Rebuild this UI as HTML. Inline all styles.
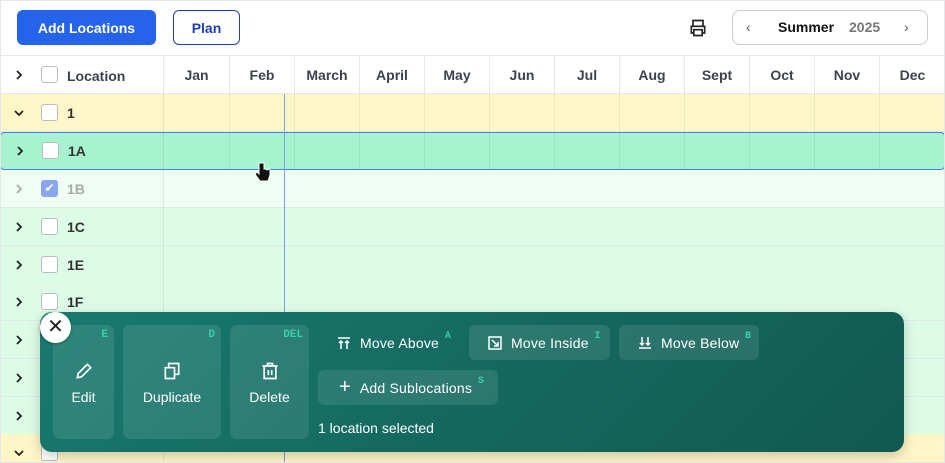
<!DOCTYPE html>
<html><head><style>
*{box-sizing:border-box;margin:0;padding:0}
body{width:945px;height:463px;overflow:hidden;background:#fff;font-family:"Liberation Sans",sans-serif;position:relative}
.abs{position:absolute}
.btn1{left:17px;top:10px;width:139px;height:35px;background:#2563eb;color:#fff;border-radius:6px;font-weight:bold;font-size:14px;display:flex;align-items:center;justify-content:center}
.btn2{left:173px;top:10px;width:67px;height:35px;border:1px solid #1e40af;color:#1e40af;border-radius:6px;font-weight:bold;font-size:14px;display:flex;align-items:center;justify-content:center}
.nav{left:732px;top:10px;width:196px;height:35px;border:1px solid #c8cbd0;border-radius:8px;font-size:14px}
.row{position:absolute;left:0;width:945px;height:38px;border-bottom:1px solid #e5e7eb}
.chev{position:absolute;left:13px;width:12px;height:12px}
.cb{position:absolute;left:41px;width:17px;height:17px;border:1px solid #b8bcc2;border-radius:3px;background:#fff}
.lbl{position:absolute;left:67px;font-weight:bold;font-size:14px;color:#333}
.hd{position:absolute;top:0;height:39px;line-height:39px;text-align:center;font-weight:bold;font-size:14px;color:#3c4350;border-left:1px solid #e5e7eb}
.panel{left:40px;top:312px;width:864px;height:140px;border-radius:12px;background:linear-gradient(135deg,#187a70,#11594f);box-shadow:0 4px 12px rgba(0,0,0,.2)}
.tile{position:absolute;top:13px;height:114px;background:rgba(255,255,255,.1);border-radius:7px;color:#fff;font-size:14px;text-align:center}
.tile .k{position:absolute;right:6px;top:4px;font-size:11px;color:#34d3a8;font-weight:bold;font-family:"Liberation Mono",monospace}
.tile .t{position:absolute;left:0;right:0;top:64px}
.tile svg{position:absolute;left:50%;top:36px;margin-left:-10px}
.pill{position:absolute;height:35px;border-radius:6px;background:rgba(255,255,255,.1);color:#fff;font-size:14px;display:flex;align-items:center;letter-spacing:.2px}
.pill sup{font-size:10px;color:#34d3a8;font-weight:bold;position:absolute;right:-12px;top:-4px;font-family:"Liberation Mono",monospace}
.vl{position:absolute;top:94px;width:1px;height:76px;background:rgba(0,0,0,.06)}
</style></head><body>
<div class="abs btn1">Add Locations</div>
<div class="abs btn2">Plan</div>
<svg class="abs" style="left:688px;top:18px" width="20" height="20" viewBox="0 0 24 24" fill="none" stroke="#222" stroke-width="2"><path d="M6 9V3h12v6M6 18H4V10h16v8h-2M7 14h10v7H7z"/></svg>
<div class="abs nav"><span class="abs" style="left:13px;top:8px;color:#555">‹</span><span class="abs" style="left:45px;top:8px;font-weight:bold;color:#111">Summer</span><span class="abs" style="left:116px;top:8px;font-weight:bold;color:#777">2025</span><span class="abs" style="left:171px;top:8px;color:#555">›</span></div>
<div class="abs" style="left:0;top:55px;width:945px;height:39px;border-top:1px solid #e5e7eb;border-bottom:1px solid #e5e7eb">
<svg class="chev" style="top:13px" viewBox="0 0 12 12"><path d="M4 2l4 4-4 4" fill="none" stroke="#222" stroke-width="1.8"/></svg><div class="cb" style="top:10px"></div><span class="lbl" style="top:12px;color:#3c4350">Location</span>
<div class="hd" style="left:163px;width:66px">Jan</div><div class="hd" style="left:229px;width:65px">Feb</div><div class="hd" style="left:294px;width:65px">March</div><div class="hd" style="left:359px;width:65px">April</div><div class="hd" style="left:424px;width:65px">May</div><div class="hd" style="left:489px;width:65px">Jun</div><div class="hd" style="left:554px;width:65px">Jul</div><div class="hd" style="left:619px;width:65px">Aug</div><div class="hd" style="left:684px;width:65px">Sept</div><div class="hd" style="left:749px;width:65px">Oct</div><div class="hd" style="left:814px;width:65px">Nov</div><div class="hd" style="left:879px;width:66px">Dec</div>
</div>
<div class="row" style="top:94px;background:#fef6c6"><svg class="chev" style="top:13px" viewBox="0 0 12 12"><path d="M2 4l4 4 4-4" fill="none" stroke="#222" stroke-width="1.8"/></svg><div class="cb" style="top:10px"></div><span class="lbl" style="top:11px">1</span></div>
<div class="row" style="top:132px;background:#a7f3d0;border:1px solid #3b82f6;border-radius:4px;height:38px"><svg class="chev" style="top:12px" viewBox="0 0 12 12"><path d="M4 2l4 4-4 4" fill="none" stroke="#222" stroke-width="1.8"/></svg><div class="cb" style="top:9px"></div><span class="lbl" style="top:10px">1A</span></div>
<div class="row" style="top:170px;background:#effdf4"><svg class="chev" style="top:13px" viewBox="0 0 12 12"><path d="M4 2l4 4-4 4" fill="none" stroke="#aaa" stroke-width="1.8"/></svg><div class="cb" style="top:10px;background:#8ba6f0;border-color:#8ba6f0;color:#fff;font-size:12px;text-align:center;line-height:15px">✔</div><span class="lbl" style="top:11px;color:#aaa">1B</span></div>
<div class="row" style="top:208px;background:#dcfce7"><svg class="chev" style="top:13px" viewBox="0 0 12 12"><path d="M4 2l4 4-4 4" fill="none" stroke="#222" stroke-width="1.8"/></svg><div class="cb" style="top:10px"></div><span class="lbl" style="top:11px">1C</span></div>
<div class="row" style="top:246px;background:#dcfce7"><svg class="chev" style="top:13px" viewBox="0 0 12 12"><path d="M4 2l4 4-4 4" fill="none" stroke="#222" stroke-width="1.8"/></svg><div class="cb" style="top:10px"></div><span class="lbl" style="top:11px">1E</span></div>
<div class="row" style="top:283px;background:#dcfce7"><svg class="chev" style="top:13px" viewBox="0 0 12 12"><path d="M4 2l4 4-4 4" fill="none" stroke="#222" stroke-width="1.8"/></svg><div class="cb" style="top:10px"></div><span class="lbl" style="top:11px">1F</span></div>
<div class="row" style="top:321px;background:#dcfce7"><svg class="chev" style="top:13px" viewBox="0 0 12 12"><path d="M4 2l4 4-4 4" fill="none" stroke="#222" stroke-width="1.8"/></svg></div>
<div class="row" style="top:359px;background:#dcfce7"><svg class="chev" style="top:13px" viewBox="0 0 12 12"><path d="M4 2l4 4-4 4" fill="none" stroke="#222" stroke-width="1.8"/></svg></div>
<div class="row" style="top:397px;background:#dcfce7"><svg class="chev" style="top:13px" viewBox="0 0 12 12"><path d="M4 2l4 4-4 4" fill="none" stroke="#222" stroke-width="1.8"/></svg></div>
<div class="row" style="top:434px;background:#fef6c6;height:29px"><svg class="chev" style="top:13px" viewBox="0 0 12 12"><path d="M2 4l4 4 4-4" fill="none" stroke="#222" stroke-width="1.8"/></svg><div class="cb" style="top:10px"></div></div>
<div class="abs" style="left:163px;top:94px;width:1px;height:369px;background:rgba(0,0,0,.07)"></div>
<div class="vl" style="left:229px"></div><div class="vl" style="left:294px"></div><div class="vl" style="left:359px"></div><div class="vl" style="left:424px"></div><div class="vl" style="left:489px"></div><div class="vl" style="left:554px"></div><div class="vl" style="left:619px"></div><div class="vl" style="left:684px"></div><div class="vl" style="left:749px"></div><div class="vl" style="left:814px"></div><div class="vl" style="left:879px"></div>
<div class="abs" style="left:284px;top:94px;width:1px;height:369px;background:#7aa3e0"></div>
<svg class="abs" style="left:254px;top:161px" width="18" height="22" viewBox="0 0 18 22"><path d="M5 2v11l-2-2-2 2 5 7h8l2-6v-5l-2-1-1 1-1-1-2 0V2z" fill="#111" stroke="#fff" stroke-width="1"/></svg>
<div class="abs panel">
<div class="tile" style="left:13px;width:61px"><span class="k">E</span><svg width="20" height="20" viewBox="0 0 24 24" fill="none" stroke="#fff" stroke-width="2"><path d="M4 20l1-5L16 4l4 4L9 19z"/></svg><span class="t">Edit</span></div>
<div class="tile" style="left:83px;width:98px"><span class="k">D</span><svg width="20" height="20" viewBox="0 0 24 24" fill="none" stroke="#fff" stroke-width="2"><path d="M8 8V3h12v13h-5M4 8h11v13H4z"/></svg><span class="t">Duplicate</span></div>
<div class="tile" style="left:190px;width:79px"><span class="k">DEL</span><svg width="20" height="20" viewBox="0 0 24 24" fill="none" stroke="#fff" stroke-width="2"><path d="M3 6h18M9 6V3h6v3M5 6v15h14V6M10 11v6M14 11v6"/></svg><span class="t">Delete</span></div>
<div class="pill" style="left:278px;top:13px;width:142px;background:none;padding-left:19px"><svg width="14" height="14" viewBox="0 0 14 14" fill="none" stroke="#fff" stroke-width="1.5" style="margin-right:9px"><path d="M1 2h12M4 13V5M2 7l2-2 2 2M10 13V5M8 7l2-2 2 2"/></svg><span style="position:relative">Move Above<sup>A</sup></span></div>
<div class="pill" style="left:429px;top:13px;width:141px;padding-left:19px"><svg width="14" height="14" viewBox="0 0 14 14" fill="none" stroke="#fff" stroke-width="1.5" style="margin-right:9px"><rect x="1" y="1" width="12" height="12"/><path d="M4 4l6 6M10 6v4H6"/></svg><span style="position:relative">Move Inside<sup>I</sup></span></div>
<div class="pill" style="left:579px;top:13px;width:140px;padding-left:19px"><svg width="14" height="14" viewBox="0 0 14 14" fill="none" stroke="#fff" stroke-width="1.5" style="margin-right:9px"><path d="M1 12h12M4 1v8M2 7l2 2 2-2M10 1v8M8 7l2 2 2-2"/></svg><span style="position:relative">Move Below<sup>B</sup></span></div>
<div class="pill" style="left:278px;top:58px;width:180px;padding-left:21px"><span style="font-size:20px;margin-right:9px;font-weight:300">+</span><span style="position:relative">Add Sublocations<sup>S</sup></span></div>
<div class="abs" style="left:278px;top:108px;color:#fff;font-size:14px">1 location selected</div>
</div>
<div class="abs" style="left:40px;top:312px;width:31px;height:31px;border-radius:50%;background:#fff;box-shadow:0 1px 3px rgba(0,0,0,.3);text-align:center;line-height:30px;font-size:20px;color:#222">✕</div>
<div class="abs" style="left:0;top:0;width:945px;height:463px;border:1px solid #e5e7eb;pointer-events:none"></div>
</body></html>
